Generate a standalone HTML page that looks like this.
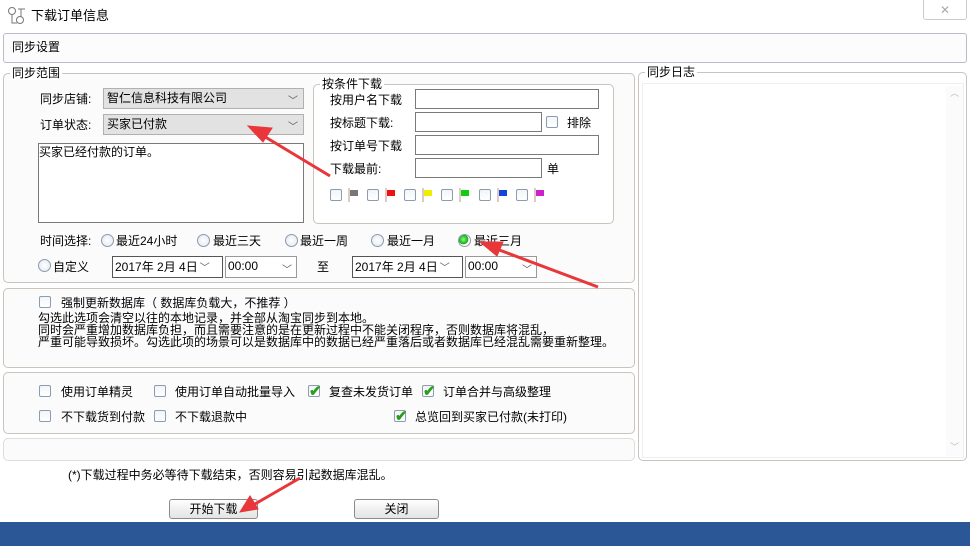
<!DOCTYPE html>
<html><head><meta charset="utf-8"><style>
*{margin:0;padding:0;box-sizing:border-box}
body{width:970px;height:546px;background:#fff;position:relative;overflow:hidden;font-family:"Liberation Sans","Noto Sans CJK SC","WenQuanYi Zen Hei",sans-serif;font-size:12px;color:#000}
div,span{position:absolute}
.t{white-space:nowrap;line-height:14px}
.grp{border:1px solid #c9c4bc;border-radius:5px;background:#fbfbfb}
.lg{background:#fff;padding:0 2px;line-height:14px}
.cb{width:12px;height:12px;border:1px solid #8b9bb0;border-radius:2px;background:linear-gradient(#f2f4f7,#fff)}
.ck::after{content:"✔";position:absolute;left:0px;top:-4px;color:#2a9d1a;font-size:15px;font-weight:bold}
.inp{border:1px solid #7a7a7a;background:#fff;height:20px}
.cmb{border:1px solid #b0b0b0;background:#e2e2e2;height:21px}
.rd{width:13px;height:13px;border:1px solid #8b9bb0;border-radius:50%;background:radial-gradient(#fff,#dfe6ee)}
.chev{font-size:10px;color:#555}
.btn{border:1px solid #8c8c8c;border-radius:3px;background:linear-gradient(#fff,#f0f0f0 50%,#e4e4e4);text-align:center;line-height:18px;height:20px}
</style></head><body>
<!-- title -->
<svg style="position:absolute;left:7px;top:6px" width="20" height="20"><circle cx="5" cy="5" r="3.5" fill="none" stroke="#777"/><circle cx="13" cy="14" r="3.5" fill="none" stroke="#777"/><path d="M11 3h7M14 3v8M5 9v8h5" stroke="#777" fill="none"/></svg>
<div class="t" style="left:31px;top:9px;font-size:13px">下载订单信息</div>
<div style="left:923px;top:-1px;width:44px;height:21px;border:1px solid #ccc;border-radius:0 0 3px 3px;text-align:center;color:#aaa;font-size:12px;line-height:20px">✕</div>
<!-- sync settings bar -->
<div style="left:3px;top:33px;width:964px;height:30px;border:1px solid #b8bccb;border-radius:3px;background:#fcfcfc"></div>
<div class="t" style="left:12px;top:40px">同步设置</div>

<!-- 同步范围 -->
<div class="grp" style="left:3px;top:73px;width:632px;height:210px"></div>
<div class="lg" style="left:10px;top:66px">同步范围</div>
<div class="t" style="left:40px;top:92px">同步店铺:</div>
<div class="cmb" style="left:103px;top:88px;width:201px"></div>
<div class="t" style="left:107px;top:91px">智仁信息科技有限公司</div>
<div class="chev" style="left:288px;top:92px">﹀</div>
<div class="t" style="left:40px;top:118px">订单状态:</div>
<div class="cmb" style="left:103px;top:114px;width:201px"></div>
<div class="t" style="left:107px;top:117px">买家已付款</div>
<div class="chev" style="left:288px;top:118px">﹀</div>
<div style="left:38px;top:143px;width:266px;height:80px;border:1px solid #7a7a7a;background:#fff"></div>
<div class="t" style="left:39px;top:145px">买家已经付款的订单。</div>

<!-- 按条件下载 -->
<div class="grp" style="left:313px;top:84px;width:301px;height:140px;background:#fff"></div>
<div class="lg" style="left:320px;top:77px">按条件下载</div>
<div class="t" style="left:330px;top:93px">按用户名下载</div>
<div class="inp" style="left:415px;top:89px;width:184px"></div>
<div class="t" style="left:330px;top:116px">按标题下载:</div>
<div class="inp" style="left:415px;top:112px;width:127px"></div>
<div class="cb" style="left:546px;top:116px"></div>
<div class="t" style="left:567px;top:116px">排除</div>
<div class="t" style="left:330px;top:139px">按订单号下载</div>
<div class="inp" style="left:415px;top:135px;width:184px"></div>
<div class="t" style="left:330px;top:162px">下载最前:</div>
<div class="inp" style="left:415px;top:158px;width:127px"></div>
<div class="t" style="left:547px;top:162px">单</div>
<div class="cb" style="left:330px;top:189px"></div><svg style="position:absolute;left:348px;top:188px" width="12" height="14"><path d="M1 0v14" stroke="#b98"/><path d="M2 2h8v6H2z" fill="#777"/></svg>
<div class="cb" style="left:367px;top:189px"></div><svg style="position:absolute;left:385px;top:188px" width="12" height="14"><path d="M1 0v14" stroke="#b98"/><path d="M2 2h8v6H2z" fill="#e11"/></svg>
<div class="cb" style="left:404px;top:189px"></div><svg style="position:absolute;left:422px;top:188px" width="12" height="14"><path d="M1 0v14" stroke="#b98"/><path d="M2 2h8v6H2z" fill="#ee0"/></svg>
<div class="cb" style="left:441px;top:189px"></div><svg style="position:absolute;left:459px;top:188px" width="12" height="14"><path d="M1 0v14" stroke="#b98"/><path d="M2 2h8v6H2z" fill="#1c1"/></svg>
<div class="cb" style="left:479px;top:189px"></div><svg style="position:absolute;left:497px;top:188px" width="12" height="14"><path d="M1 0v14" stroke="#b98"/><path d="M2 2h8v6H2z" fill="#14d"/></svg>
<div class="cb" style="left:516px;top:189px"></div><svg style="position:absolute;left:534px;top:188px" width="12" height="14"><path d="M1 0v14" stroke="#b98"/><path d="M2 2h8v6H2z" fill="#c2c"/></svg>

<!-- time -->
<div class="t" style="left:40px;top:234px">时间选择:</div>
<div class="rd" style="left:101px;top:234px"></div><div class="t" style="left:116px;top:234px">最近24小时</div>
<div class="rd" style="left:197px;top:234px"></div><div class="t" style="left:213px;top:234px">最近三天</div>
<div class="rd" style="left:285px;top:234px"></div><div class="t" style="left:300px;top:234px">最近一周</div>
<div class="rd" style="left:371px;top:234px"></div><div class="t" style="left:387px;top:234px">最近一月</div>
<div class="rd" style="left:458px;top:234px;background:radial-gradient(circle at 40% 40%,#8f8,#1a1 50%,#fff 55%)"></div><div class="t" style="left:474px;top:234px">最近三月</div>
<div class="rd" style="left:38px;top:259px"></div><div class="t" style="left:53px;top:260px">自定义</div>
<div style="left:112px;top:256px;width:111px;height:22px;border:1px solid #555;background:#fff"></div>
<div class="t" style="left:115px;top:260px">2017年 2月 4日<span class="chev" style="position:static;margin-left:2px">﹀</span></div>
<div style="left:225px;top:256px;width:72px;height:22px;border:1px solid #999;background:#fff"></div>
<div class="t" style="left:228px;top:259px">00:00</div><div class="chev" style="left:282px;top:261px">﹀</div>
<div class="t" style="left:317px;top:260px">至</div>
<div style="left:352px;top:256px;width:111px;height:22px;border:1px solid #555;background:#fff"></div>
<div class="t" style="left:355px;top:260px">2017年 2月 4日<span class="chev" style="position:static;margin-left:2px">﹀</span></div>
<div style="left:465px;top:256px;width:72px;height:22px;border:1px solid #999;background:#fff"></div>
<div class="t" style="left:468px;top:259px">00:00</div><div class="chev" style="left:522px;top:261px">﹀</div>

<!-- force -->
<div class="grp" style="left:3px;top:288px;width:632px;height:80px"></div>
<div class="cb" style="left:39px;top:296px"></div>
<div class="t" style="left:61px;top:296px">强制更新数据库（ 数据库负载大，不推荐 ）</div>
<div class="t" style="left:38px;top:312px;line-height:12px">勾选此选项会清空以往的本地记录，并全部从淘宝同步到本地。<br>同时会严重增加数据库负担，而且需要注意的是在更新过程中不能关闭程序，否则数据库将混乱，<br>严重可能导致损坏。勾选此项的场景可以是数据库中的数据已经严重落后或者数据库已经混乱需要重新整理。</div>

<!-- options -->
<div class="grp" style="left:3px;top:372px;width:632px;height:62px"></div>
<div class="cb" style="left:39px;top:385px"></div><div class="t" style="left:61px;top:385px">使用订单精灵</div>
<div class="cb" style="left:154px;top:385px"></div><div class="t" style="left:175px;top:385px">使用订单自动批量导入</div>
<div class="cb ck" style="left:308px;top:385px"></div><div class="t" style="left:329px;top:385px">复查未发货订单</div>
<div class="cb ck" style="left:422px;top:385px"></div><div class="t" style="left:443px;top:385px">订单合并与高级整理</div>
<div class="cb" style="left:39px;top:410px"></div><div class="t" style="left:61px;top:410px">不下载货到付款</div>
<div class="cb" style="left:154px;top:410px"></div><div class="t" style="left:175px;top:410px">不下载退款中</div>
<div class="cb ck" style="left:394px;top:410px"></div><div class="t" style="left:415px;top:410px">总览回到买家已付款(未打印)</div>

<div class="grp" style="left:3px;top:438px;width:632px;height:23px;border-color:#ddd"></div>

<!-- log -->
<div class="grp" style="left:638px;top:72px;width:329px;height:389px;background:#fff"></div>
<div class="lg" style="left:645px;top:65px">同步日志</div>
<div style="left:642px;top:83px;width:322px;height:375px;border:1px solid #eee;background:#fff"></div>
<div style="left:946px;top:86px;width:17px;height:370px;background:#fbfbfb"></div>
<div class="t" style="left:950px;top:86px;color:#bbb;font-size:9px">︿</div>
<div class="t" style="left:950px;top:440px;color:#bbb;font-size:9px">﹀</div>

<div class="t" style="left:68px;top:468px">(*)下载过程中务必等待下载结束，否则容易引起数据库混乱。</div>
<div class="btn" style="left:169px;top:499px;width:89px">开始下载</div>
<div class="btn" style="left:354px;top:499px;width:85px">关闭</div>
<div style="left:0;top:522px;width:970px;height:24px;background:#2c5797"></div>

<!-- arrows -->
<svg style="position:absolute;left:0;top:0" width="970" height="546">
<g fill="#e8363a" stroke="#e8363a">
<path d="M330 176L262 135" stroke-width="3"/><path d="M248 126L272 128L263 142z" stroke-width="1"/>
<path d="M598 287L494 248" stroke-width="3"/><path d="M480 242L503 242L497 256z" stroke-width="1"/>
<path d="M300 478L255 504" stroke-width="3"/><path d="M240 512L250 496L258 509z" stroke-width="1"/>
</g></svg>
</body></html>
